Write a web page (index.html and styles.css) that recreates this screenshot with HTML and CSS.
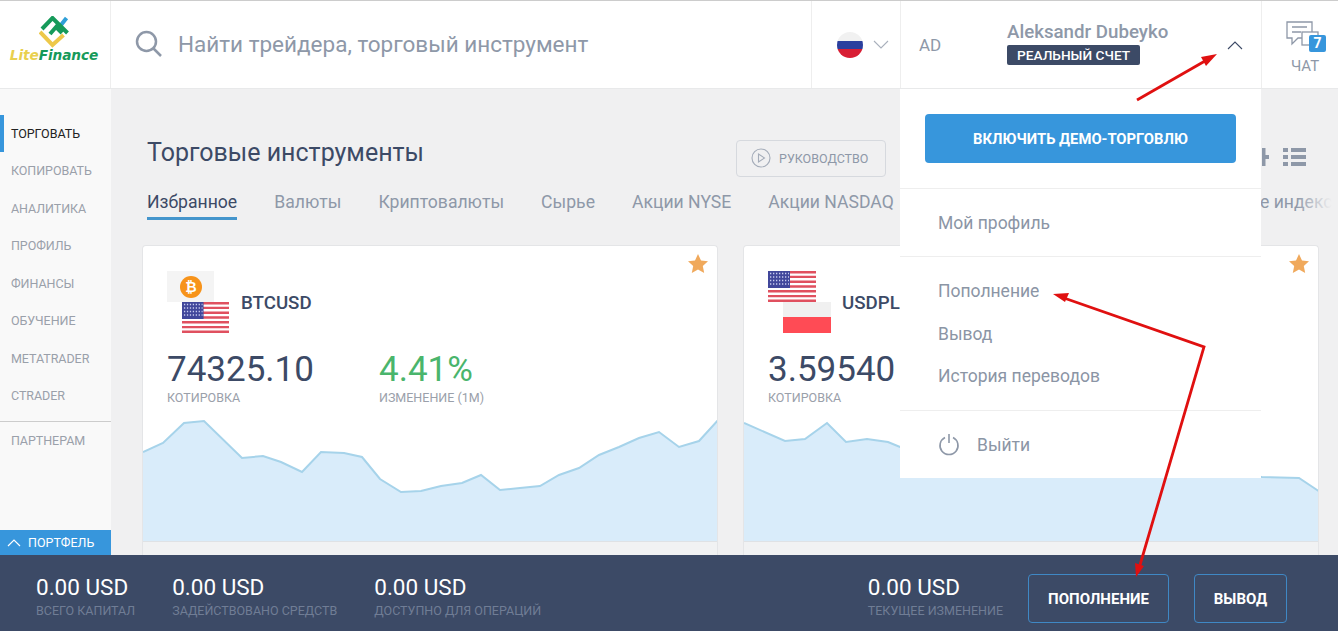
FILE: index.html
```html
<!DOCTYPE html>
<html lang="ru">
<head>
    <meta charset="UTF-8" />
    <meta name="viewport" content="width=device-width, initial-scale=1.0" />
    <title>LiteFinance</title>
    <link rel="stylesheet" href="styles.css">
</head>
<body>
    <svg class="defs" width="0" height="0">
        <symbol id="flag-us" viewBox="0 0 48 31" preserveAspectRatio="none">
            <rect width="48" height="31" fill="#fff"/>
            <path d="M0 1.2h48M0 5.9h48M0 10.7h48M0 15.5h48M0 20.3h48M0 25.1h48M0 29.8h48" stroke="#e0505f" stroke-width="2.4"/>
            <rect width="22" height="17" fill="#41479b"/>
            <path d="M2 2.5h19M2 6h19M2 9.500h19M2 13h19" stroke="#c9cdf0" stroke-width="1.300" stroke-dasharray="1.300 1.700"/>
        </symbol>
    </svg>

    <div class="app">
        <header class="topbar">
            <div class="logo">
                <svg class="logo-mark" width="32" height="32" viewBox="0 0 32 32">
                    <path d="M1 16l12.500 13 11-10" fill="none" stroke="#edc84a" stroke-width="4"/>
                    <path d="M22 9l5.500-7" stroke="#2f9fd8" stroke-width="4"/>
                    <path d="M3 13L13.500 2l15 15M11 18L20.500 7M17 11l6 6" fill="none" stroke="#169a5a" stroke-width="4"/>
                </svg>
                <div class="logo-text"><span class="lite">Lite</span><span class="finance">Finance</span></div>
            </div>
            <div class="search">
                <svg width="28" height="28" viewBox="0 0 28 28">
                    <circle cx="11.500" cy="11.500" r="9.500" fill="none" stroke="#8e98a8" stroke-width="2.500"/>
                    <path d="M18 18l8 8" stroke="#8e98a8" stroke-width="2.500"/>
                </svg>
                <span>Найти трейдера, торговый инструмент</span>
            </div>
            <div class="lang">
                <svg width="26" height="26" viewBox="0 0 26 26">
                    <clipPath id="round"><circle cx="13" cy="13" r="13"/></clipPath>
                    <g clip-path="url(#round)">
                        <rect width="26" height="9" fill="#f1f1f1"/>
                        <rect y="9" width="26" height="8" fill="#2b3f9e"/>
                        <rect y="17" width="26" height="9" fill="#d81e34"/>
                    </g>
                </svg>
                <svg width="16" height="10" viewBox="0 0 16 10"><path d="M1 1l7 7 7-7" fill="none" stroke="#a9b0bc" stroke-width="1.100"/></svg>
            </div>
            <div class="user">
                <span class="avatar">AD</span>
                <div class="user-info">
                    <div class="user-name">Aleksandr Dubeyko</div>
                    <span class="user-badge">РЕАЛЬНЫЙ СЧЕТ</span>
                </div>
                <svg class="user-arrow" width="16" height="10" viewBox="0 0 16 10"><path d="M1 9l7-7 7 7" fill="none" stroke="#3c4a66" stroke-width="1.100"/></svg>

                <div class="dropdown">
                    <div class="dropdown-top">
                        <button class="demo-button">ВКЛЮЧИТЬ ДЕМО-ТОРГОВЛЮ</button>
                    </div>
                    <div class="dropdown-one">
                        <a>Мой профиль</a>
                    </div>
                    <div class="dropdown-group">
                        <a>Пополнение</a>
                        <a>Вывод</a>
                        <a>История переводов</a>
                    </div>
                    <div class="dropdown-exit">
                        <svg width="22" height="22" viewBox="0 0 22 22">
                            <path d="M7 3.500a9 9 0 1 0 8 0" fill="none" stroke="#8e98a8" stroke-width="1.600"/>
                            <path d="M11 0v9" stroke="#8e98a8" stroke-width="1.600"/>
                        </svg>
                        <a>Выйти</a>
                    </div>
                </div>
            </div>
            <div class="chat">
                <div class="chat-icon">
                    <svg width="34" height="30" viewBox="0 0 34 30">
                        <path d="M1 1h25v16H12l-6 6v-6H1z" fill="none" stroke="#8e98a8" stroke-width="1.300"/>
                        <path d="M6 6h15M6 11h9" stroke="#8e98a8" stroke-width="1.300"/>
                        <rect x="16" y="11" width="16" height="13" fill="#fff" stroke="#8e98a8" stroke-width="1.300"/>
                    </svg>
                    <span class="chat-count">7</span>
                </div>
                <span class="chat-label">ЧАТ</span>
            </div>
        </header>

        <div class="middle">
            <nav class="sidebar">
                <ul class="menu">
                    <li class="active">ТОРГОВАТЬ</li>
                    <li>КОПИРОВАТЬ</li>
                    <li>АНАЛИТИКА</li>
                    <li>ПРОФИЛЬ</li>
                    <li>ФИНАНСЫ</li>
                    <li>ОБУЧЕНИЕ</li>
                    <li>METATRADER</li>
                    <li>CTRADER</li>
                </ul>
                <div class="menu-partner">ПАРТНЕРАМ</div>
                <div class="portfolio">
                    <svg width="14" height="8" viewBox="0 0 14 8"><path d="M1 7l6-6 6 6" fill="none" stroke="#fff" stroke-width="1.200"/></svg>
                    <span>ПОРТФЕЛЬ</span>
                </div>
            </nav>

            <main class="content">
                <div class="title-row">
                    <h1>Торговые инструменты</h1>
                    <button class="guide">
                        <svg width="20" height="20" viewBox="0 0 20 20">
                            <circle cx="10" cy="10" r="9" fill="none" stroke="#a4acb9" stroke-width="1.100"/>
                            <path d="M7.500 6v8l6-4z" fill="none" stroke="#a4acb9" stroke-width="1.100"/>
                        </svg>
                        РУКОВОДСТВО
                    </button>
                    <div class="views">
                        <svg width="54" height="20" viewBox="0 0 54 20">
                            <path d="M10 1h3.500v18H10zM13.500 8H17v4h-3.500z" fill="#8e98a8"/>
                            <path d="M31 1h5v4h-5zM39 1h15v4H39zM31 8h5v4h-5zM39 8h15v4H39zM31 15h5v4h-5zM39 15h15v4H39z" fill="#8e98a8"/>
                        </svg>
                    </div>
                </div>

                <div class="tabs">
                    <a class="tab current">Избранное</a>
                    <a class="tab">Валюты</a>
                    <a class="tab">Криптовалюты</a>
                    <a class="tab">Сырье</a>
                    <a class="tab">Акции NYSE</a>
                    <a class="tab">Акции NASDAQ</a>
                    <a class="tab tab-last">Мировые индексы</a>
                </div>

                <div class="cards">
                    <section class="card">
                        <svg class="star" width="20" height="19" viewBox="0 0 20 19"><path d="M10 0l3 6.400 7 .8-5.200 4.800 1.400 7L10 15.500 3.800 19l1.400-7L0 7.200l7-.8z" fill="#f0a95c"/></svg>
                        <div class="card-head">
                            <div class="pair">
                                <div class="coin">
                                    <svg width="22" height="22" viewBox="0 0 22 22">
                                        <circle cx="11" cy="11" r="11" fill="#f7931a"/>
                                        <text x="11" y="16" text-anchor="middle" class="coin-sign">₿</text>
                                    </svg>
                                </div>
                                <svg class="flag flag-second" width="47" height="31"><use href="#flag-us"/></svg>
                            </div>
                            <span class="symbol">BTCUSD</span>
                        </div>
                        <div class="stats">
                            <div class="stat">
                                <div class="stat-value">74325.10</div>
                                <div class="stat-label">КОТИРОВКА</div>
                            </div>
                            <div class="stat">
                                <div class="stat-value up">4.41%</div>
                                <div class="stat-label">ИЗМЕНЕНИЕ (1М)</div>
                            </div>
                        </div>
                        <svg class="chart" width="576" height="122" viewBox="142 419 576 122">
                            <polygon class="area" points="142,452 162,443 183,423 203,421 241,458 262,456 280,462 301,472 320,452 343,453 361,457 379,479 400,492 420,491 440,486 461,483 480,475 499,490 519,488 539,486 558,475 578,468 598,455 618,447 638,438 658,432 678,447 698,441 718,419 718,541 142,541"/>
                            <polyline class="line" points="142,452 162,443 183,423 203,421 241,458 262,456 280,462 301,472 320,452 343,453 361,457 379,479 400,492 420,491 440,486 461,483 480,475 499,490 519,488 539,486 558,475 578,468 598,455 618,447 638,438 658,432 678,447 698,441 718,419"/>
                        </svg>
                        <div class="card-foot"></div>
                    </section>

                    <section class="card">
                        <svg class="star" width="20" height="19" viewBox="0 0 20 19"><path d="M10 0l3 6.400 7 .8-5.200 4.800 1.400 7L10 15.500 3.800 19l1.400-7L0 7.200l7-.8z" fill="#f0a95c"/></svg>
                        <div class="card-head">
                            <div class="pair">
                                <svg class="flag" width="48" height="31"><use href="#flag-us"/></svg>
                                <div class="flag-pl flag-second"></div>
                            </div>
                            <span class="symbol">USDPLN</span>
                        </div>
                        <div class="stats">
                            <div class="stat">
                                <div class="stat-value">3.59540</div>
                                <div class="stat-label">КОТИРОВКА</div>
                            </div>
                        </div>
                        <svg class="chart" width="576" height="122" viewBox="743 419 576 122">
                            <polygon class="area" points="743,423 784,441 804,439 826,423 845,442 866,439 887,442 899,447 1261,477 1298,478 1319,492 1319,541 743,541"/>
                            <polyline class="line" points="743,423 784,441 804,439 826,423 845,442 866,439 887,442 899,447 1261,477 1298,478 1319,492"/>
                        </svg>
                        <div class="card-foot"></div>
                    </section>
                </div>
            </main>
        </div>

        <footer class="bottombar">
            <div class="sum">
                <div class="sum-value">0.00 USD</div>
                <div class="sum-label">ВСЕГО КАПИТАЛ</div>
            </div>
            <div class="sum">
                <div class="sum-value">0.00 USD</div>
                <div class="sum-label">ЗАДЕЙСТВОВАНО СРЕДСТВ</div>
            </div>
            <div class="sum">
                <div class="sum-value">0.00 USD</div>
                <div class="sum-label">ДОСТУПНО ДЛЯ ОПЕРАЦИЙ</div>
            </div>
            <div class="sum sum-right">
                <div class="sum-value">0.00 USD</div>
                <div class="sum-label">ТЕКУЩЕЕ ИЗМЕНЕНИЕ</div>
            </div>
            <button class="money-button deposit">ПОПОЛНЕНИЕ</button>
            <button class="money-button withdraw">ВЫВОД</button>
        </footer>

        <svg class="arrows" width="1338" height="631" viewBox="0 0 1338 631">
            <path d="M1137 100L1205 61" stroke="#e01010" stroke-width="2.800" fill="none"/>
            <path d="M1217 54l-16 3 5 9z" fill="#e01010"/>
            <path d="M1064 298L1204 347L1140 565" stroke="#e01010" stroke-width="2.800" fill="none"/>
            <path d="M1053 294l16-1-4 9z" fill="#e01010"/>
            <path d="M1136 577l-1-14 9 3z" fill="#e01010"/>
        </svg>
    </div>
</body>
</html>
```

FILE: styles.css
```css
* { box-sizing: border-box; }

html, body {
    margin: 0;
    height: 100%;
    overflow: hidden;
}

body {
    font-family: Roboto, "Liberation Sans", sans-serif;
    color: #3c4a66;
    background: #f0f0f1;
}

.defs { position: absolute; }

.app {
    position: relative;
    width: 1338px;
    height: 631px;
    display: flex;
    flex-direction: column;
}

/* top bar */
.topbar {
    height: 89px;
    flex: none;
    display: flex;
    background: #fff;
    border-top: 1px solid #ccc;
    border-bottom: 1px solid #e8e9ea;
}

.logo {
    width: 111px;
    flex: none;
    display: flex;
    flex-direction: column;
    align-items: center;
    padding-top: 15px;
    border-right: 1px solid #eee;
}

.logo-text {
    font-family: "DejaVu Sans", sans-serif;
    font-style: italic;
    font-weight: 700;
    font-size: 13.700px;
    letter-spacing: -0.1px;
    margin: -1px 2px 0 0;
}

.lite { color: #e9d04e; }
.finance { color: #169a5a; }

.search {
    flex: 1;
    min-width: 0;
    display: flex;
    align-items: center;
    gap: 15px;
    padding: 0 0 2px 24px;
    font-size: 22.500px;
    color: #8e98a8;
    white-space: nowrap;
}

.lang {
    width: 89px;
    flex: none;
    display: flex;
    align-items: center;
    gap: 10px;
    padding-left: 25px;
    border-left: 1px solid #eee;
}

.user {
    position: relative;
    width: 361px;
    flex: none;
    display: flex;
    align-items: center;
    border-left: 1px solid #eee;
    padding-left: 18px;
}

.avatar {
    width: 88px;
    font-size: 17px;
    color: #8e98a8;
}

.user-info { margin-top: -4px; }

.user-name {
    font-size: 18.700px;
    font-weight: 500;
    line-height: 22px;
    color: #8e98a8;
}

.user-badge {
    display: inline-block;
    margin-top: 2px;
    padding: 0 10px;
    height: 20px;
    line-height: 20px;
    border-radius: 2px;
    background: #3c4a66;
    color: #fff;
    font-size: 13.700px;
    font-weight: 500;
}

.user-arrow { margin-left: auto; margin-right: 18px; }

.dropdown {
    position: absolute;
    top: 88px;
    left: -1px;
    width: 361px;
    background: #fff;
    z-index: 5;
    color: #8b95a5;
    font-size: 17.500px;
}

.dropdown a { display: block; }

.dropdown-top {
    padding: 25px;
    height: 100px;
    border-bottom: 1px solid #eee;
}

.demo-button {
    width: 311px;
    height: 49px;
    border: none;
    border-radius: 4px;
    background: #3796dc;
    color: #fff;
    font-family: inherit;
    font-size: 14.800px;
    font-weight: 700;
}

.dropdown-one {
    height: 68px;
    display: flex;
    align-items: center;
    padding-left: 38px;
    border-bottom: 1px solid #eee;
}

.dropdown-group {
    height: 154px;
    display: flex;
    flex-direction: column;
    justify-content: center;
    gap: 22.500px;
    padding-left: 38px;
    border-bottom: 1px solid #eee;
}

.dropdown-group a { line-height: 20px; }

.dropdown-exit {
    height: 67px;
    display: flex;
    align-items: center;
    gap: 17px;
    padding: 1px 0 0 38px;
}

.chat {
    width: 77px;
    flex: none;
    display: flex;
    flex-direction: column;
    align-items: center;
    padding: 20px 0 0 10px;
    border-left: 1px solid #eee;
}

.chat-icon {
    position: relative;
    width: 40px;
    height: 31px;
    margin-left: 2px;
}

.chat-count {
    position: absolute;
    right: 0;
    bottom: 0;
    width: 17px;
    height: 17px;
    border-radius: 2px;
    background: #3796dc;
    color: #fff;
    font-size: 14px;
    font-weight: 700;
    line-height: 17px;
    text-align: center;
}

.chat-label {
    font-size: 15px;
    color: #8e98a8;
    margin-top: 5px;
}

/* middle */
.middle {
    flex: 1;
    min-height: 0;
    display: flex;
}

.sidebar {
    width: 111px;
    flex: none;
    display: flex;
    flex-direction: column;
    background: #f9f9f9;
    font-size: 12.500px;
    color: #9aa0aa;
}

.menu {
    list-style: none;
    margin: 0;
    padding: 25.600px 0 0;
    border-bottom: 1px solid #ccc;
    height: 333px;
}

.menu li {
    height: 37.500px;
    line-height: 37.500px;
    padding-left: 11px;
    letter-spacing: -0.05px;
}

.menu li.active {
    color: #222;
    border-left: 4px solid #3796dc;
    padding-left: 7px;
}

.menu-partner {
    padding: 11px 0 0 11px;
    letter-spacing: -0.05px;
}

.portfolio {
    margin-top: auto;
    height: 25px;
    display: flex;
    align-items: center;
    gap: 7px;
    padding-left: 7px;
    background: #3796dc;
    color: #fff;
}

.content {
    flex: 1;
    min-width: 0;
    overflow: hidden;
    padding: 50px 32px 0 31px;
}

.title-row {
    display: flex;
    align-items: center;
    padding-left: 5px;
    height: 38px;
}

h1 {
    margin: -11px 0 0;
    width: 589px;
    font-size: 25px;
    font-weight: 400;
    color: #3c4a66;
}

.guide {
    width: 150px;
    height: 37px;
    display: flex;
    align-items: center;
    gap: 8px;
    padding: 0 14px;
    border: 1px solid #d6d9de;
    border-radius: 4px;
    background: none;
    font-family: inherit;
    font-size: 12.500px;
    color: #8e98a8;
}

.views {
    margin: -3px 0 0 auto;
    height: 20px;
}

.tabs {
    position: relative;
    display: flex;
    gap: 37px;
    margin: 11px -26px 0 0;
    padding-left: 5px;
    height: 37px;
    font-size: 17.600px;
    color: #8e98a8;
    overflow: hidden;
    white-space: nowrap;
}

.tabs::after {
    content: "";
    position: absolute;
    top: 0;
    right: 0;
    width: 36px;
    height: 100%;
    background: linear-gradient(to right, rgba(240,240,241,0), #f0f0f1);
}

.tab {
    height: 32px;
    line-height: 28px;
    flex: none;
}

.tab.current {
    color: #3c4a66;
    border-bottom: 3px solid #4495cc;
}

.tab-last { margin-left: 260px; }

.cards {
    display: flex;
    gap: 25px;
    margin-top: 20px;
    width: 1177px;
}

.card {
    position: relative;
    width: 576px;
    flex: none;
    background: #fff;
    border: 1px solid #e4e5e7;
    border-bottom: none;
    border-radius: 4px 4px 0 0;
    overflow: hidden;
}

.star {
    position: absolute;
    top: 8px;
    right: 9px;
}

.card-head {
    display: flex;
    align-items: center;
    gap: 11px;
    padding: 25px 0 0 24px;
}

.pair {
    width: 63px;
    height: 62px;
    display: flex;
    flex-direction: column;
}

.flag { display: block; flex: none; }

.flag-second { margin-left: 15px; }

.coin {
    width: 47px;
    height: 31px;
    flex: none;
    background: #f4f4f4;
    display: flex;
    align-items: center;
    justify-content: center;
}

.coin-sign {
    fill: #fff;
    font-family: "DejaVu Sans", sans-serif;
    font-size: 14px;
    font-weight: 700;
}

.flag-pl {
    width: 48px;
    height: 31px;
    flex: none;
    background: linear-gradient(to bottom, #f0f0f0 50%, #ff4b55 50%);
}

.symbol {
    font-size: 18.700px;
    font-weight: 500;
    color: #3c4a66;
    margin-top: 1px;
}

.stats {
    display: flex;
    padding: 16px 0 0 24px;
}

.stat { width: 212px; }

.stat-value {
    font-size: 35px;
    line-height: 41px;
    color: #3c4a66;
}

.stat-value.up { color: #4ab56c; }

.stat-label {
    font-size: 12.500px;
    line-height: 14px;
    color: #9aa0aa;
    margin-top: 1px;
}

.chart {
    display: block;
    margin-top: 14px;
}

.area { fill: #d9ecfa; }

.line {
    fill: none;
    stroke: #a6d3ea;
    stroke-width: 2;
}

.card-foot {
    height: 40px;
    border-top: 1px solid #dfe2e5;
    background: #f1f2f3;
}

/* bottom bar */
.bottombar {
    height: 76px;
    flex: none;
    display: flex;
    align-items: center;
    gap: 37px;
    padding: 6px 51px 0 36px;
    background: #3c4a66;
}

.sum-value {
    font-size: 22.500px;
    line-height: 26px;
    margin-bottom: 3px;
    color: #fff;
}

.sum-label {
    font-size: 12.500px;
    line-height: 16px;
    color: #707d95;
}

.sum-right { margin-left: auto; margin-right: -12px; }

.money-button {
    height: 49px;
    margin-top: 5px;
    border: 1px solid #3f88c5;
    border-radius: 4px;
    background: none;
    color: #fff;
    font-family: inherit;
    font-size: 15px;
    font-weight: 700;
}

.deposit { width: 141px; }
.withdraw { width: 93px; margin-left: -12px; }

/* annotation arrows drawn over the screenshot */
.arrows {
    position: absolute;
    top: 0;
    left: 0;
    z-index: 10;
    pointer-events: none;
}
```
